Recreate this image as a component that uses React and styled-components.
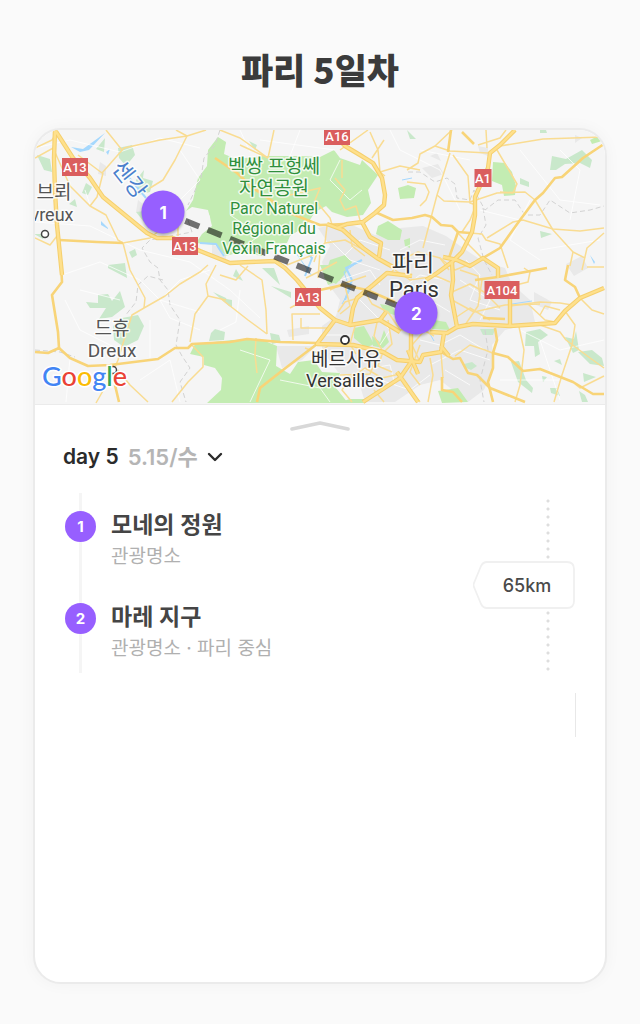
import React from "react";
import styled, { createGlobalStyle } from "styled-components";

const places = [
  { id: 1, name: "모네의 정원", info: "관광명소", left: 22.5, top: 30 },
  { id: 2, name: "마레 지구", info: "관광명소 · 파리 중심", left: 66.9, top: 66.8 },
];

const shields = [
  { text: "A16", x: 337, y: 136, w: 26 },
  { text: "A13", x: 75, y: 167, w: 26 },
  { text: "A1", x: 483, y: 178, w: 17 },
  { text: "A13", x: 185, y: 246, w: 26 },
  { text: "A13", x: 308, y: 297, w: 26 },
  { text: "A104", x: 502, y: 290, w: 35 },
];

const cityAreas = [
  "M318 228 L345 222 L375 235 L400 228 L423 226 L446 236 L466 250 L484 262 L505 268 L512 284 L530 300 L535 322 L505 330 L492 345 L494 366 L484 390 L468 402 L440 380 L420 385 L395 402 L365 402 L360 386 L338 372 L322 350 L322 326 L336 316 L340 300 L328 284 L322 262 L330 246 Z",
  "M100 162 l6 4 v10 l-8 -2z M138 200 l10 8 v7 l-12 -3z",
  "M212 244 l14 8 v8 l-14 -4z",
  "M422 168 l16 -4 l6 10 l-12 4z M430 156 l7 -3 l4 8z",
  "M478 146 l10 2 v8 l-8 -3z M575 135 l7 3 l-7 5z",
  "M566 264 l16 -8 l6 12 l-14 8z M534 292 l18 10 l-4 8 l-14 -6z",
  "M276 346 l40 0 l-14 14 l-20 8z M287 330 l22 -4 v8 l-20 3z",
];

const parks = [
  "M218 137 L226 142 L224 154 L236 159 L262 156 L300 156 L320 157 L334 150 L340 158 L360 165 L362 160 L378 175 L368 190 L371 203 L363 215 L347 217 L332 212 L326 206 L315 212 L306 226 L290 236 L287 243 L268 244 L262 256 L240 252 L226 256 L216 245 L196 243 L202 234 L212 226 L208 210 L192 207 L186 211 L193 200 L198 178 L207 166 L208 150 Z",
  "M190 354 L195 344 L232 340 L260 339 L277 346 L276 366 L290 374 L298 362 L314 360 L322 372 L340 373 L336 388 L348 403 L207 403 L221 390 L222 378 L215 368 L204 365 L204 357 Z",
  "M493 162 L505 163 L512 172 L516 186 L515 195 L504 196 L502 185 L492 181 Z",
  "M330 260 L345 255 L352 262 L346 273 L336 284 L324 278 Z",
  "M320 265 L343 265 L341 280 L328 285 Z",
  "M378 226 L388 221 L402 230 L400 240 L388 240 L376 234 Z",
  "M398 188 L408 185 L416 188 L414 198 L400 199 Z",
  "M354 328 L364 326 L374 344 L366 348 L354 338 Z",
  "M372 336 l8 6 l4 -12 l5 12 l-6 6 l-10 -2 Z",
  "M380 304 l12 2 l6 10 l-14 -4 Z M434 320 l12 2 l4 8 l-18 -1 Z",
  "M438 391 L458 388 L468 402 L442 403 Z M590 140 l8 -4 l4 5 l-10 3z",
  "M340 402 l10 -3 l14 0 v4 h-24z M404 240 l6 -2 v10 l-5 -2z",
];

const woods = [
  "M37 155 L50 159 L52 172 L44 170 Z",
  "M96 149 L105 138 L104 152 Z M118 148 L132 145 L135 155 L126 166 L119 158 Z",
  "M136 180 L144 170 L143 178 L153 181 L150 192 L138 195 Z",
  "M82 193 l4 -10 l6 4 l-4 8z M69 204 l6 -5 l2 8z M34 234 h13 l-4 5z M136 212 l10 -1 l-2 11z",
  "M129 252 l6 -3 l2 6 l-5 3z M108 265 L125 263 L127 278 L108 268 Z",
  "M86 302 L98 303 L98 295 L108 294 L112 301 L120 291 L125 307 L112 317 L99 319 L106 308 L90 308 Z",
  "M122 318 L138 315 L144 326 L138 340 L124 347 L114 340 L113 326 Z",
  "M211 333 L215 329 L225 332 L224 340 L209 341 Z M213 292 L226 298 L230 307 Z",
  "M233 276 l3 -7 l7 12z M262 268 L274 268 L280 285 Z M271 286 L291 292 L291 298 Z M221 298 l11 2 v8z M270 333 l9 2 l2 7 l-9 2z",
  "M552 156 L566 159 L582 150 L592 160 L590 168 L580 163 L565 164 L556 170 L550 170 Z",
  "M520 178 l9 4 v5 l-9 -3z M540 231 l12 3 l-11 4z M540 130 h6 l1 3 h-7z",
  "M526 332 L540 329 L548 335 L538 342 L540 354 L535 357 L534 346 L525 346 Z",
  "M565 337 l9 2 l2 -8 l3 19 l-6 3z M578 352 L592 350 L602 358 L604 366 L590 364 Z",
  "M511 362 L519 361 L526 380 L533 388 L532 393 L518 382 Z",
  "M464 364 l8 -2 l5 4 l-6 4 l-7 -3z M480 329 h15 l-2 6 h-10z M554 361 l6 -2 l2 6z M542 376 l5 1 l-4 5z",
  "M583 373 l13 4 l-12 5z M550 388 l7 0 l3 8 l-9 -3z M579 391 l6 4 l3 7 h-6z",
  "M220 139 l6 4 l-3 5z M249 141 l8 4 l-2 5z M407 130 l9 9 l-6 0z",
];

const water =
  "M71 147 L83 149 L105 133 L89 150 L80 152 Z M106 152 l4 -3 l-2 6z M101 221 l7 7 v1 l-7 -4z M590 255 l5 7 l-1 2z";

const minorRoads = [
  "M35 148 L70 140 L120 152 L160 138 L200 148",
  "M35 222 L90 226 L140 250 L190 262 L230 290 L260 318",
  "M62 275 L100 262 L140 280 L160 300 L200 312",
  "M65 300 L80 330 L120 350 M70 358 L66 402 M120 300 L80 290",
  "M160 300 L180 280 L210 270 M180 150 L200 180 L180 200",
  "M140 380 L170 360 L180 402 M150 320 L150 358 M90 205 L85 190",
  "M200 330 L170 318 L160 300 M240 290 L236 322 L220 330",
  "M240 130 L250 152 M300 130 L290 156 M260 140 L335 150",
  "M340 160 L330 180 L350 200 L362 190 M230 215 L260 235 L240 250",
  "M390 130 L400 150 L440 170 L460 210 M420 150 L470 160",
  "M520 150 L560 200 L600 205 M560 150 L580 170 L570 220",
  "M530 200 L510 240 L540 260 M540 250 L600 240 M480 210 L520 220",
  "M520 330 L560 350 L604 340 M540 340 L560 400 M500 380 L560 380",
  "M240 350 L270 360 L250 402 M280 380 L320 388 L330 402",
  "M330 240 L350 260 L380 270 M345 255 L360 240 L390 250 M400 250 L420 240 L445 245",
  "M340 280 L370 270 L380 285 M400 290 L420 275 L445 280 M360 300 L390 330 L380 345",
  "M430 300 L450 312 M460 280 L490 300 L480 320 M466 260 L480 275 L470 300 L500 310",
  "M420 340 L440 345 L460 335 L485 350 M430 365 L460 350 L490 360 M445 370 L470 385",
  "M360 370 L390 365 L395 385 M325 335 L350 335 M380 380 L410 390 L430 375",
];

const thinRoads = [
  "M35 148 L52 140 L56 134 M35 158 L55 147 M78 155 L102 173 L124 148 L160 140 L187 136 L206 130",
  "M187 136 L175 160 L163 180 L150 188 M106 130 L118 145 L122 150 M187 136 L176 130",
  "M54 150 L70 186 L90 206 L106 215 L118 240 L123 243 M90 206 L97 197 L103 173",
  "M35 238 L50 245 L57 236 M123 243 L150 238 L175 218 M123 243 L130 270 L145 298 L144 308",
  "M144 308 L165 296 L180 284 L200 272 L208 265 M144 308 L132 315 L124 340 L118 360 L112 375 L96 403",
  "M216 265 L206 284 L208 296 L195 314 L190 342 M208 296 L226 300",
  "M192 345 L203 357 L203 367 L188 382 L172 402 M118 370 L130 385 L148 402 M178 212 L178 236",
  "M220 130 L240 138 L268 158 L274 130 M268 158 L240 145 M340 150 L368 130",
  "M370 132 L378 150 L380 172 L400 166 L420 170 M384 140 L372 158 M407 170 L418 163 L420 154 L435 146 L452 130",
  "M435 146 L450 151 L488 153 M450 153 L437 195 L423 248 M453 155 L468 176 L470 203 L476 205 L470 220 L462 232",
  "M437 195 L444 201 L470 202 L497 193 L525 192 L535 200 L553 230 L573 252 L585 258",
  "M486 130 L487 148 M478 145 L500 138 L506 130 M500 146 L543 139 L602 137 M497 150 L510 172 L517 184 L513 193 L500 192",
  "M487 238 L513 222 L523 220 L553 229 L580 231 L604 228 M604 233 L587 248 L582 270 M573 252 L570 266 M587 267 H604",
  "M458 233 L470 246 L482 258 M470 233 L482 234 L486 240 L500 244 L508 268",
  "M407 182 L425 184 L429 192 L426 200 L420 206 M385 176 L375 168",
  "M335 178 L345 190 L340 200 L345 210 L356 206 L360 220 M342 160 L342 178 M290 195 L320 188 L315 200 L330 218 L333 228",
  "M327 226 L325 243 L318 250 L314 262 M325 243 L345 240 L360 248 M350 230 L352 246 L365 256",
  "M287 265 L320 252 L318 278 M337 262 L322 270 L306 278 M345 286 L350 306 L340 314",
  "M220 275 L236 280 L248 266 M220 298 L248 320 L267 334 M267 334 L266 310 L262 280 L240 265",
  "M293 340 L292 314 L320 314 M301 318 V328 H330 M328 346 L318 353 L305 348 M256 338 L255 355 L257 373",
  "M390 275 L400 260 L418 252 L440 258 L449 270 M395 270 L410 280 L436 276 L450 282",
  "M364 290 L372 304 L388 312 L400 330 M378 318 L374 336 L382 350 M388 320 L392 344 L384 352",
  "M355 326 L350 344 L356 354 M400 330 L420 328 L434 336 M420 362 L412 345 L425 330",
  "M440 258 L455 270 L475 262 M452 292 L470 284 L484 292 L500 308 M452 300 L474 312 L505 305 L540 304",
  "M455 318 L470 308 L490 320 M465 325 L478 306 L482 280 M460 270 L478 276 L480 300",
  "M510 306 L540 302 L560 303 L572 305 M528 304 L545 320 L555 322 M540 315 L545 306 L560 310",
  "M540 325 L560 332 L566 340 L590 358 L604 368 M565 311 L575 325 L572 345 L562 375 L554 402",
  "M519 327 L524 350 L520 385 L515 402 M524 268 L530 272 L528 282 L512 286 M580 298 L592 310 L604 314",
  "M604 376 L580 388 L575 384 M455 356 L470 345 L485 350 L495 354 M420 385 L410 372 L420 345",
  "M430 358 L433 375 L428 402 M441 353 L443 378 M350 378 L365 368 L382 378 L400 374 M350 378 L342 390 L352 402",
  "M340 375 L370 374 L375 362 M383 352 L378 366 L392 372 M384 402 L374 390 M400 378 L420 402",
  "M318 288 L305 300 L290 308 M330 290 L342 284 L366 276 M358 298 L345 302 L338 312",
];

const mainRoads = [
  "M345 224 L320 225 L307 220 L290 213 L253 188 L237 173 L215 158",
  "M375 212 L393 220 L412 218 L425 215 L432 217 L441 225 L452 226 L458 232 L470 233",
  "M458 232 L449 258 M451 130 L448 152 M462 132 L474 144",
  "M604 144 L583 158 L562 177 L555 178 L543 193 L535 200 L520 220 L500 248 L483 258 L470 266",
  "M475 280 L498 277 L547 268 M483 318 L505 319",
  "M35 352 L48 353 L59 348 L70 358 L88 366 L110 365 L158 359 L175 348 L188 348 L192 344 L230 342 L247 339 L280 342 L317 343",
  "M59 240 L97 242 L123 243 M59 348 L58 332 L52 295 L62 282 L61 265 M115 385 L119 402",
  "M257 402 L260 388 L283 370 L317 344",
  "M495 328 L497 340 L493 353 L493 368 L488 382 L493 402",
  "M493 353 L508 357 L523 371 L540 369 L573 382 L593 394 L604 394",
  "M441 352 L453 359 L460 358 L468 373 L477 375 L490 388 L525 402 M442 377 L442 390 L453 392 L462 402",
  "M568 265 L565 280 L575 287 L580 298 M320 290 L343 285 L367 290 L395 302",
];

const highways = [
  "M55 130 L73 158 L90 178 L103 197 L147 233 L157 238 L173 238 L200 251 L220 259 L230 263 L250 262 L275 261 L285 268 L297 280 L320 308 L335 320 L350 325 L380 320 L400 332",
  "M55 130 L54 158 L55 192 L57 225 L62 275",
  "M337 138 L345 146 L360 155 L373 163 L382 178 L385 195 L384 205 L375 213 L363 222 L347 224 L337 228",
  "M327 224 L343 230 L363 248 L377 258 L393 267 M362 222 L370 237 L381 243 L379 257",
  "M515 130 L500 145 L490 153 L488 168 L475 197 L475 215 L472 232 L462 252 L452 262 L437 273 L426 280",
  "M443 257 L457 260 L470 266 L483 258 L498 268 L498 278",
  "M452 262 L453 280 L451 295 L457 327 L447 333 L430 332",
  "M457 327 L473 324 L510 326 L555 323 L565 311 L580 298 L604 288 M510 326 V298",
  "M335 320 L317 344 L353 345 L383 352 L397 360 L420 362 L423 355 L441 352 L444 333",
  "M411 330 V362 L400 378 L363 402 M397 372 L418 402 M350 325 L353 308 L357 298 L373 285 L387 273 L412 276",
  "M380 320 L386 312 M408 350 L418 374 M441 346 L449 356",
];

const borders =
  "M220 130 L215 145 L204 158 L201 178 L188 205 M188 220 L192 232 L150 240 L142 248 L150 262 L158 268 L160 280 L168 290 L170 305 L180 320 L176 345 L182 356 L190 368 L180 382 L186 402 M163 280 L148 276 L138 285 L136 302 L125 316 M35 350 L60 352 L75 357 M408 172 L420 172 L435 182 L447 178 L455 184 L457 198 L470 200 L474 190 L485 210 L498 200 L515 200 L525 215 L540 215 L550 200 L570 213 L590 210 L604 206 M483 208 L486 225 L478 238 L484 260 L492 275 M485 330 L488 350 L480 380 L484 402";

const MapDrawing = () => (
  <MapSvg viewBox="35 130 570 274" role="img" aria-label="파리 지도">
    <rect x="35" y="130" width="570" height="274" fill="#f5f5f5" />
    <g fill="#e9e9e9">
      {cityAreas.map((d) => (
        <path key={d} d={d} />
      ))}
    </g>
    <g fill="#c9e8cb">
      {woods.map((d) => (
        <path key={d} d={d} />
      ))}
    </g>
    <g fill="#c3ecb2">
      {parks.map((d) => (
        <path key={d} d={d} />
      ))}
    </g>
    <path d="M188 215 q8 -9 20 -2 q6 8 -4 15 q-10 4 -16 -8z" fill="#f5f5f5" />
    <path d={water} fill="#a5d8fd" />
    <g fill="none" stroke="#a5d8fd" strokeWidth="2">
      <path d="M126 174 L146 198 M200 243 L216 244 L224 256 M305 276 L312 258 L306 252 M345 300 L352 280 L346 268 L362 260" />
      <path
        d="M342 304 L350 290 L344 272 L358 262 M512 304 L532 301 M402 180 L412 178 M430 334 L434 341 M296 253 L312 276"
        strokeWidth="1"
      />
    </g>
    <g fill="none" strokeLinejoin="round">
      <path d={borders} stroke="#d2d2d2" strokeDasharray="5 3" />
      <g stroke="#fff" strokeOpacity="0.75">
        {minorRoads.map((d) => (
          <path key={d} d={d} />
        ))}
      </g>
      <g stroke="#f9dc92" strokeWidth="1.5">
        {thinRoads.map((d) => (
          <path key={d} d={d} />
        ))}
      </g>
      <g stroke="#f8d478" strokeWidth="2.6">
        {mainRoads.map((d) => (
          <path key={d} d={d} />
        ))}
      </g>
      <g stroke="#f5cf6d" strokeWidth="4.4">
        {highways.map((d) => (
          <path key={d} d={d} />
        ))}
      </g>
      <g stroke="#fee08c" strokeWidth="2.4">
        {highways.map((d) => (
          <path key={d} d={d} />
        ))}
      </g>
    </g>
    {shields.map(({ text, x, y, w }) => (
      <g key={`${text}-${x}`}>
        <rect x={x - w / 2} y={y - 9} width={w} height="18" fill="#da5e5e" />
        <ShieldText x={x} y={y + 5}>
          {text}
        </ShieldText>
      </g>
    ))}
    <path
      d="M163 212 L416 313"
      stroke="#000"
      strokeOpacity="0.55"
      strokeWidth="6"
      strokeDasharray="15 9"
    />
    <circle cx="45" cy="234" r="3.5" fill="#fff" stroke="#444" strokeWidth="1.5" />
    <circle cx="345" cy="340" r="4" fill="#fff" stroke="#333" strokeWidth="1.8" />
    <circle cx="113" cy="370" r="3.5" fill="#fff" stroke="#444" strokeWidth="1.5" />
    <MapText x="54" y="199" $size={19}>브뢰</MapText>
    <MapText x="52" y="221" $size={18}>vreux</MapText>
    <MapText x="112" y="335" $size={19}>드휴</MapText>
    <MapText x="112" y="357" $size={19}>Dreux</MapText>
    <MapText x="413" y="271" $size={23} $color="#333">파리</MapText>
    <MapText x="414" y="297" $size={22} $color="#333">Paris</MapText>
    <MapText x="346" y="366" $size={19} $color="#333">베르사유</MapText>
    <MapText x="345" y="387" $size={18} $color="#333">Versailles</MapText>
    <MapText x="274" y="173" $size={19} $color="#2f8f3c">벡쌍 프헝쎄</MapText>
    <MapText x="274" y="195" $size={19} $color="#2f8f3c">자연공원</MapText>
    <MapText x="274" y="214" $size={16} $color="#2f8f3c">Parc Naturel</MapText>
    <MapText x="274" y="234" $size={16} $color="#2f8f3c">Régional du</MapText>
    <MapText x="274" y="254" $size={16} $color="#2f8f3c">Vexin Français</MapText>
    <g transform="translate(129 180) rotate(52)">
      <MapText x="0" y="7" $size={22} $color="#4a80cc">센강</MapText>
    </g>
    <GoogleText x="42" y="386">
      <tspan fill="#4285f4">G</tspan>
      <tspan fill="#ea4335">o</tspan>
      <tspan fill="#fbbc05">o</tspan>
      <tspan fill="#4285f4">g</tspan>
      <tspan fill="#34a853">l</tspan>
      <tspan fill="#ea4335">e</tspan>
    </GoogleText>
  </MapSvg>
);

const App = () => {
  return (
    <>
      <GlobalStyle />
      <Page>
        <PageTitle>파리 5일차</PageTitle>
        <Card>
          <MapBox>
            <MapDrawing />
            {places.map((place) => (
              <Pin key={place.id} type="button" $left={place.left} $top={place.top}>
                {place.id}
              </Pin>
            ))}
          </MapBox>
          <HandleButton type="button" aria-label="일정 펼치기">
            <svg width="60" height="12" viewBox="0 0 60 12" fill="none">
              <path
                d="M2 9 L30 3 L58 9"
                stroke="#d8d8d8"
                strokeWidth="3.6"
                strokeLinecap="round"
                strokeLinejoin="round"
              />
            </svg>
          </HandleButton>
          <DayButton type="button" aria-haspopup="listbox">
            <span>day 5</span>
            <DayDate>5.15/수</DayDate>
            <svg width="16" height="10" viewBox="0 0 16 10" fill="none">
              <path
                d="M2 2 L8 8 L14 2"
                stroke="#2b2b2b"
                strokeWidth="2.4"
                strokeLinecap="round"
                strokeLinejoin="round"
              />
            </svg>
          </DayButton>
          <Schedule>
            <PlaceList>
              {places.map((place) => (
                <PlaceItem key={place.id}>
                  <PlaceNumber>{place.id}</PlaceNumber>
                  <div>
                    <PlaceName>{place.name}</PlaceName>
                    <PlaceInfo>{place.info}</PlaceInfo>
                  </div>
                </PlaceItem>
              ))}
            </PlaceList>
            <DistanceColumn>
              <Dots />
              <DistanceTag>
                <svg width="102" height="48" viewBox="0 0 102 48">
                  <path
                    d="M14 1 H94 Q101 1 101 8 V40 Q101 47 94 47 H14 Q10 47 8 43 L1 26 Q0 24 1 22 L8 5 Q10 1 14 1 Z"
                    fill="#fff"
                    stroke="#f0f0f0"
                    strokeWidth="1.8"
                  />
                </svg>
                <span>65km</span>
              </DistanceTag>
              <Dots />
            </DistanceColumn>
          </Schedule>
          <EdgeLine />
        </Card>
      </Page>
    </>
  );
};

export default App;

const GlobalStyle = createGlobalStyle`
  * {
    box-sizing: border-box;
  }
  body {
    margin: 0;
    background-color: #fafafa;
    font-family: Inter, "Noto Sans CJK KR", sans-serif;
  }
`;

const Page = styled.main`
  min-height: 100vh;
  padding: 44px 33px 40px;
  display: flex;
  flex-direction: column;
`;

const PageTitle = styled.h1`
  margin: 0 0 34px;
  color: #3b3b3b;
  font-family: "Noto Sans CJK KR", sans-serif;
  font-size: 35px;
  font-weight: 900;
  line-height: 50px;
  text-align: center;
`;

const Card = styled.section`
  flex: 1;
  display: flex;
  flex-direction: column;
  overflow: hidden;
  border: 2px solid #ebebeb;
  border-radius: 28px;
  background-color: #fff;
  box-shadow: 0 0 16px rgba(0, 0, 0, 0.04);
`;

const MapBox = styled.div`
  position: relative;
  border-bottom: 1px solid #ebebeb;
`;

const MapSvg = styled.svg`
  width: 100%;
  display: block;
`;

const MapText = styled.text`
  font-family: Roboto, "Noto Sans CJK KR", sans-serif;
  font-size: ${({ $size }) => $size}px;
  fill: ${({ $color }) => $color || "#555"};
  stroke: #fff;
  stroke-width: 3px;
  stroke-opacity: 0.8;
  stroke-linejoin: round;
  paint-order: stroke;
  text-anchor: middle;
`;

const ShieldText = styled.text`
  fill: #fff;
  font-family: Roboto, sans-serif;
  font-size: 13px;
  font-weight: 500;
  text-anchor: middle;
`;

const GoogleText = styled.text`
  font-family: Lato, sans-serif;
  font-size: 27px;
  font-weight: 500;
  stroke: #fff;
  stroke-width: 3px;
  paint-order: stroke;
`;

const PlainButton = styled.button`
  padding: 0;
  border: none;
  background: none;
  font-family: inherit;
  cursor: pointer;
`;

const Pin = styled(PlainButton)`
  position: absolute;
  left: ${({ $left }) => $left}%;
  top: ${({ $top }) => $top}%;
  width: 43px;
  height: 43px;
  transform: translate(-50%, -50%);
  border-radius: 50%;
  background-color: #975fff;
  box-shadow: 0 2px 3px rgba(0, 0, 0, 0.3);
  color: #fff;
  font-size: 17px;
  font-weight: 700;
`;

const HandleButton = styled(PlainButton)`
  height: 36px;
  padding-top: 6px;
  display: flex;
  justify-content: center;
  align-items: center;
`;

const DayButton = styled(PlainButton)`
  align-self: flex-start;
  margin-left: 28px;
  height: 32px;
  display: flex;
  align-items: center;
  gap: 9px;
  color: #2b2b2b;
  font-size: 21px;
  font-weight: 600;
  line-height: 32px;
`;

const DayDate = styled.span`
  color: #b5b5b5;
  font-size: 22px;
`;

const Schedule = styled.div`
  margin-top: 20px;
  padding: 0 30px;
  display: flex;
  justify-content: space-between;
`;

const PlaceList = styled.ol`
  margin: 0;
  padding: 16px 0 8px;
  list-style: none;
  display: flex;
  flex-direction: column;
  gap: 28px;
  background: linear-gradient(#f5f5f5, #f5f5f5) 14px 0 / 3px 100% no-repeat;
`;

const PlaceItem = styled.li`
  display: flex;
  gap: 15px;
`;

const PlaceNumber = styled.span`
  width: 31px;
  height: 31px;
  margin-top: 2px;
  display: flex;
  justify-content: center;
  align-items: center;
  border-radius: 50%;
  background-color: #975fff;
  color: #fff;
  font-size: 15px;
  font-weight: 700;
`;

const PlaceName = styled.h2`
  margin: 0;
  color: #454545;
  font-size: 23px;
  font-weight: 600;
  line-height: 32px;
`;

const PlaceInfo = styled.p`
  margin: 0;
  color: #b0b0b0;
  font-size: 19px;
  line-height: 32px;
`;

const DistanceColumn = styled.div`
  padding-top: 4px;
  display: flex;
  flex-direction: column;
`;

const Dots = styled.span`
  flex: 1;
  width: 4px;
  margin-left: 73px;
  background-image: radial-gradient(circle, #dedede 1px, transparent 2px);
  background-size: 4px 8px;
  background-repeat: round;
`;

const DistanceTag = styled.div`
  display: grid;
  place-items: center;
  color: #4a4a4a;
  font-size: 18px;
  font-weight: 500;

  svg,
  span {
    grid-area: 1 / 1;
  }
  svg {
    display: block;
  }
  span {
    padding-left: 6px;
  }
`;

const EdgeLine = styled.span`
  align-self: flex-end;
  width: 1px;
  height: 44px;
  margin: 20px 29px 0 0;
  background-color: #e8e8e8;
`;
